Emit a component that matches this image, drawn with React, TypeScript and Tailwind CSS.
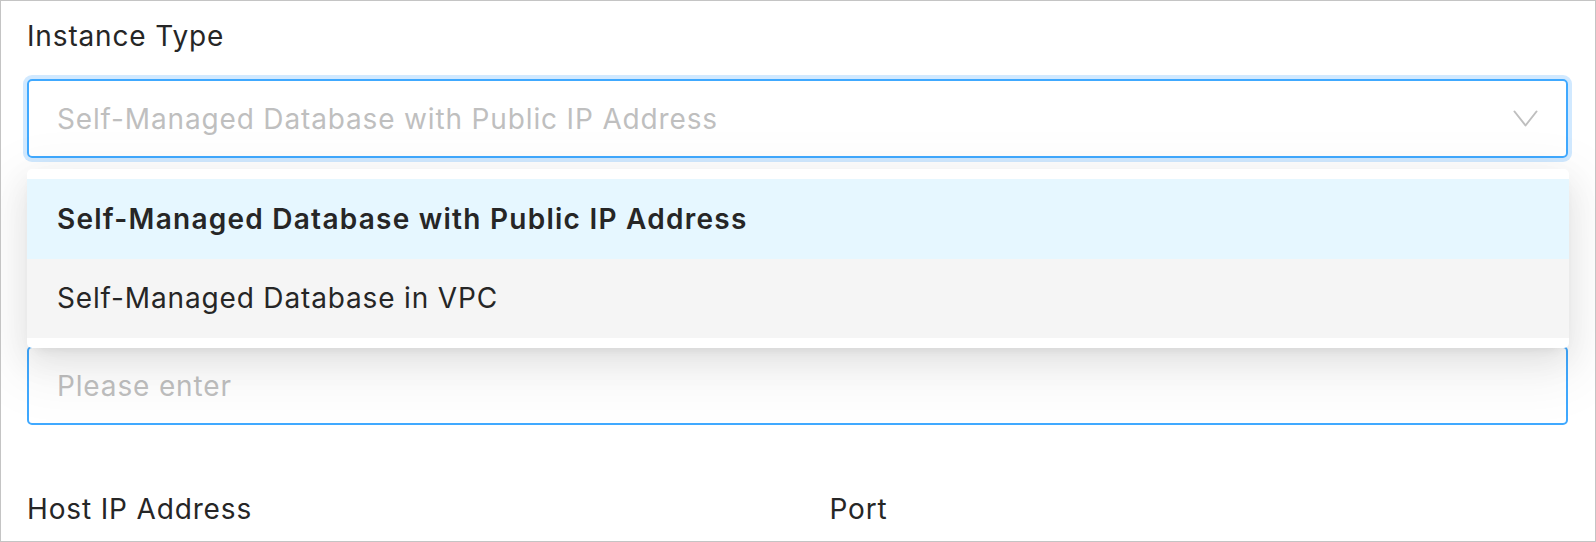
import React from "react";

const options = [
  { label: "Self-Managed Database with Public IP Address", selected: true },
  { label: "Self-Managed Database in VPC", selected: false },
];

const ChevronDown = () => (
  <svg width="25" height="18" viewBox="0 0 25 18" fill="none">
    <polyline points="1.5,1.5 12.5,15.5 23.5,1.5" stroke="#bfbfbf" strokeWidth="2" strokeLinecap="round" strokeLinejoin="round" />
  </svg>
);

const App: React.FC = () => {
  return (
    <div
      className="relative w-[1596px] h-[542px] overflow-hidden border border-[#c4c4c4] bg-white text-[#262626] tracking-[0.85px]"
      style={{ fontFamily: "Inter, 'Noto Sans', sans-serif" }}
    >
      <div className="px-[26px] pt-[15px]">
        {/* Instance Type */}
        <label className="block h-[40px] text-[28px] leading-[40px]">Instance Type</label>
        <div className="mt-[23px] flex h-[79px] w-[1541px] items-center justify-between rounded-[5px] border-2 border-[#40a9ff] pl-[28px] pr-[28px] shadow-[0_0_0_4px_rgba(24,144,255,0.2)]">
          <span className="text-[28px] text-[#bfbfbf]">Self-Managed Database with Public IP Address</span>
          <ChevronDown />
        </div>

        {/* field hidden behind the open dropdown */}
        <div className="mt-[188px] flex h-[79px] w-[1541px] items-center rounded-[5px] border-2 border-[#40a9ff] pl-[28px]">
          <span className="text-[28px] text-[#bfbfbf]">Please enter</span>
        </div>

        <div className="mt-[64px] grid w-[1541px] grid-cols-2 gap-x-[64px]">
          <label className="block h-[40px] text-[28px] leading-[40px]">Host IP Address</label>
          <label className="block h-[40px] text-[28px] leading-[40px]">Port</label>
        </div>
      </div>

      {/* Dropdown menu */}
      <div className="absolute left-[26px] top-[168px] w-[1542px] rounded-[5px] bg-white py-[10px] shadow-[0_6px_12px_-8px_rgba(0,0,0,0.12),0_12px_32px_0_rgba(0,0,0,0.08),0_18px_56px_16px_rgba(0,0,0,0.05)]">
        {options.map((o) => (
          <div
            key={o.label}
            className={`flex h-[79.5px] items-center pl-[30px] text-[28px] ${
              o.selected ? "bg-[#e6f7ff] font-semibold tracking-[1.25px]" : "bg-[#f5f5f5]"
            }`}
          >
            {o.label}
          </div>
        ))}
      </div>
    </div>
  );
};

export default App;
